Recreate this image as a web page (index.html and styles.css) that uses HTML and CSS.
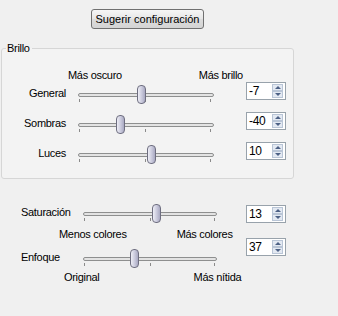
FILE: index.html
```html
<!DOCTYPE html>
<html lang="es">
<head>
    <meta charset="UTF-8">
    <title>Ajustes de imagen</title>
    <link rel="stylesheet" href="styles.css">
</head>
<body>
    <div class="panel">
        <button class="suggest">Sugerir configuración</button>

        <!-- Brillo -->
        <fieldset class="group">
            <legend>Brillo</legend>
            <div class="ends ends-brillo">
                <span>Más oscuro</span>
                <span>Más brillo</span>
            </div>

            <div class="row">
                <label class="lbl">General</label>
                <div class="slider">
                    <div class="track"></div>
                    <i class="tick t0"></i><i class="tick t1"></i><i class="tick t2"></i>
                    <div class="thumb" style="left: 59px"></div>
                </div>
                <div class="spin"><span>-7</span><b class="up"></b><b class="down"></b></div>
            </div>

            <div class="row">
                <label class="lbl">Sombras</label>
                <div class="slider">
                    <div class="track"></div>
                    <i class="tick t0"></i><i class="tick t1"></i><i class="tick t2"></i>
                    <div class="thumb" style="left: 38px"></div>
                </div>
                <div class="spin"><span>-40</span><b class="up"></b><b class="down"></b></div>
            </div>

            <div class="row">
                <label class="lbl">Luces</label>
                <div class="slider">
                    <div class="track"></div>
                    <i class="tick t0"></i><i class="tick t1"></i><i class="tick t2"></i>
                    <div class="thumb" style="left: 69px"></div>
                </div>
                <div class="spin"><span>10</span><b class="up"></b><b class="down"></b></div>
            </div>
        </fieldset>

        <!-- Saturacion -->
        <div class="row row-sat">
            <label class="lbl lbl-left">Saturación</label>
            <div class="slider">
                <div class="track"></div>
                <i class="tick t0"></i><i class="tick t1"></i><i class="tick t2"></i>
                <div class="thumb" style="left: 69px"></div>
            </div>
            <div class="spin"><span>13</span><b class="up"></b><b class="down"></b></div>
        </div>
        <div class="ends ends-sat">
            <span>Menos colores</span>
            <span>Más colores</span>
        </div>

        <!-- Enfoque -->
        <div class="row row-enf">
            <label class="lbl lbl-left">Enfoque</label>
            <div class="slider">
                <div class="track"></div>
                <i class="tick t0"></i><i class="tick t1"></i><i class="tick t2"></i>
                <div class="thumb" style="left: 47px"></div>
            </div>
            <div class="spin"><span>37</span><b class="up"></b><b class="down"></b></div>
        </div>
        <div class="ends ends-enf">
            <span>Original</span>
            <span>Más nítida</span>
        </div>
    </div>
</body>
</html>
```

FILE: styles.css
```css
* {
    margin: 0;
    padding: 0;
    box-sizing: border-box;
}

body {
    background: #f0f0f0;
    font-family: "Liberation Sans", Arial, sans-serif;
    font-size: 11px;
    letter-spacing: -0.3px;
    color: #000;
    width: 338px;
    height: 316px;
    overflow: hidden;
}

.panel {
    padding-top: 9px;
}

.suggest {
    display: block;
    margin-left: 91px;
    width: 113px;
    height: 20px;
    border: 1px solid #707070;
    border-radius: 3px;
    background: linear-gradient(#f6f6f6, #e6e6e6 50%, #dcdcdc 50%, #d4d4d4);
    font: inherit;
    white-space: nowrap;
    line-height: 16px;
}

/* group box */
.group {
    margin: 12px 0 0 1px;
    width: 293px;
    border: 1px solid #d6d6d6;
    border-radius: 3px;
    background: #f3f3f3;
    padding: 0 0 6px 0;
}

.group legend {
    margin-left: 4px;
    padding: 0 2px 0 1px;
    line-height: 14px;
}

.ends {
    display: flex;
    line-height: 14px;
}

.ends-brillo {
    margin-top: 13px;
    padding-left: 66px;
}

.ends-brillo span + span {
    margin-left: 77px;
}

.row {
    display: flex;
    align-items: flex-start;
    height: 30px;
}

.group .row:first-of-type {
    margin-top: 8px;
}

.lbl {
    width: 64px;
    text-align: right;
    line-height: 14px;
    margin-top: 4px;
}

.slider {
    position: relative;
    width: 136px;
    height: 20px;
    margin: 3px 0 0 12px;
}

.track {
    margin-top: 8px;
    height: 4px;
    border: 1px solid #8e8f8f;
    border-radius: 2px;
    background: #e3e3e3;
}

.tick {
    position: absolute;
    top: 14px;
    width: 1px;
    height: 3px;
    background: #8a8a8a;
}

.t0 { left: 1px; }
.t1 { left: 67px; }
.t2 { left: 132px; }

.thumb {
    position: absolute;
    top: 0;
    width: 9px;
    height: 19px;
    border: 1px solid #6e6e80;
    border-radius: 4px;
    background: linear-gradient(90deg, #eeeef6, #c9c9dc 55%, #a9a9c2);
}

.spin {
    position: relative;
    width: 40px;
    height: 18px;
    margin-left: 32px;
    border: 1px solid #98a2ab;
    background: #fff;
    line-height: 16px;
    padding-left: 2px;
    font-size: 12px;
}

.spin b {
    position: absolute;
    right: 2px;
    width: 11px;
    height: 7px;
    border: 1px solid #b9c5d6;
    background: #e3e9f2;
}

.spin .up { top: 1px; }
.spin .down { top: 8px; }

.spin b::after {
    content: "";
    position: absolute;
    left: 2px;
    border-left: 3px solid transparent;
    border-right: 3px solid transparent;
}

.spin .up::after {
    top: 1px;
    border-bottom: 3px solid #4d6185;
}

.spin .down::after {
    top: 1px;
    border-top: 3px solid #4d6185;
}

/* lower section */
.row-sat {
    margin-top: 26px;
    height: 22px;
}

.row-sat .spin,
.row-enf .spin {
    margin-left: 29px;
}

.lbl-left {
    margin-left: 21px;
    width: 62px;
    text-align: left;
    margin-top: 0;
}

.row-sat .slider {
    margin: -1px 0 0 0;
    width: 134px;
}

.row-sat .slider .t2,
.row-enf .slider .t2 {
    left: 131px;
}

.ends-sat {
    padding-left: 59px;
}

.ends-sat span + span {
    margin-left: 50px;
}

.row-enf {
    margin-top: -3px;
    height: 32px;
}

.row-enf .lbl {
    margin-top: 12px;
}

.row-enf .slider {
    margin: 11px 0 0 0;
    width: 134px;
}

.ends-enf {
    padding-left: 64px;
}

.ends-enf span + span {
    margin-left: 94px;
}
```
